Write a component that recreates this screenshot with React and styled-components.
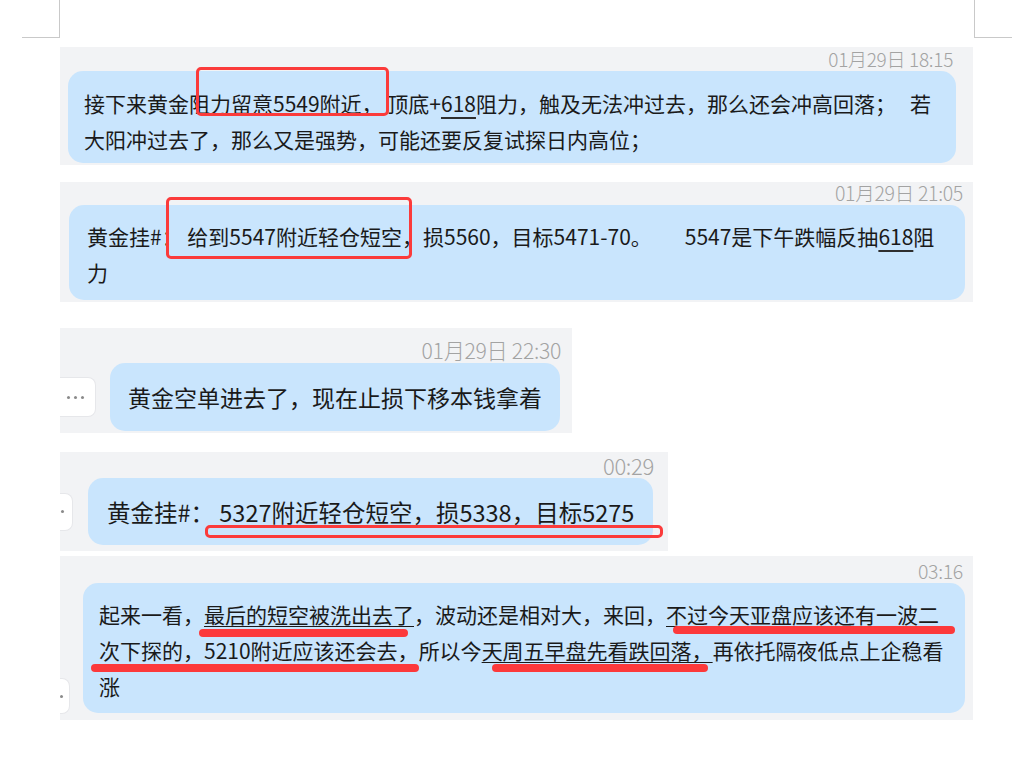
import React from 'react';
import styled, { createGlobalStyle } from 'styled-components';

const Global = createGlobalStyle`
  html, body {
    margin: 0;
    padding: 0;
    background: #ffffff;
  }
  body {
    font-family: "Noto Sans CJK SC", "Noto Sans", sans-serif;
    color: #1a1a1a;
  }
`;

const Page = styled.div`
  width: 1032px;
  height: 761px;
  overflow: hidden;
`;

const Marks = styled.div`
  display: flex;
  justify-content: space-between;
  margin-left: 22px;
  width: 990px;
  height: 38px;
`;

const Corner = styled.div`
  width: 38px;
  height: 38px;
  box-sizing: border-box;
  border-bottom: 1px solid #c9c9c9;
  ${p => (p.$side === 'left' ? 'border-right: 1px solid #c9c9c9;' : 'border-left: 1px solid #c9c9c9;')}
`;

const Feed = styled.div`
  display: flex;
  flex-direction: column;
  margin-left: 60px;
`;

const Panel = styled.section`
  width: ${p => p.$w}px;
  margin-top: ${p => p.$mt}px;
  padding: ${p => p.$pt}px 0 ${p => p.$pb}px;
  background: #f2f3f5;
  box-sizing: border-box;
`;

const Stamp = styled.div`
  text-align: right;
  font-size: ${p => p.$size}px;
  line-height: ${p => p.$lh}px;
  letter-spacing: -0.3px;
  padding-right: ${p => p.$pr}px;
  margin-bottom: ${p => p.$mb}px;
  color: #a3a3a3;
  font-weight: 300;
  white-space: nowrap;
`;

const Row = styled.div`
  display: flex;
  align-items: ${p => p.$align || 'center'};
  gap: ${p => p.$gap || 0}px;
  padding: 0 ${p => p.$pr}px 0 ${p => p.$pl}px;
`;

const More = styled.div`
  flex: none;
  display: flex;
  align-items: center;
  justify-content: flex-end;
  gap: 4px;
  width: ${p => p.$w}px;
  height: ${p => p.$h}px;
  padding-right: ${p => p.$pr}px;
  margin-bottom: ${p => p.$mb || 0}px;
  background: #ffffff;
  border: 1px solid #e6e7ea;
  border-left: none;
  border-radius: 0 8px 8px 0;
  box-sizing: border-box;
  overflow: hidden;
`;

const Dot = styled.i`
  flex: none;
  width: 3px;
  height: 3px;
  border-radius: 50%;
  background: #8a8a8a;
`;

const Bubble = styled.div`
  flex: ${p => (p.$fill ? '1' : 'none')};
  padding: ${p => p.$pad};
  background: #c9e5fd;
  border-radius: 15px;
  font-size: ${p => p.$size}px;
  line-height: ${p => p.$lh}px;
  color: #1a1a1a;
`;

const Line = styled.div`
  white-space: pre;
`;

const Link = styled.span`
  text-decoration: underline;
  text-decoration-thickness: 2px;
  text-underline-offset: 5px;
  text-decoration-color: #2e2e2e;
`;

const Boxed = styled.span`
  position: relative;
  display: inline-block;
  &::after {
    content: '';
    position: absolute;
    left: ${p => p.$l}px;
    right: ${p => p.$r}px;
    top: ${p => p.$t}px;
    bottom: ${p => p.$b}px;
    border: 3px solid #fb3b3b;
    border-radius: 5px;
    pointer-events: none;
  }
`;

const Marked = styled.span`
  position: relative;
  display: inline-block;
  text-decoration: ${p => (p.$under ? 'underline' : 'none')};
  text-decoration-thickness: 1px;
  text-underline-offset: 3px;
  &::after {
    content: '';
    position: absolute;
    left: ${p => p.$l}px;
    right: ${p => p.$r}px;
    bottom: ${p => p.$b}px;
    height: 8px;
    border-radius: 4px;
    background: #fc393b;
  }
`;

const MoreButton = ({ w, h, pr, mb }) => (
  <More $w={w} $h={h} $pr={pr} $mb={mb}>
    <Dot />
    <Dot />
    <Dot />
  </More>
);

export default function App() {
  return (
    <Page>
      <Global />
      <Marks>
        <Corner $side="left" />
        <Corner $side="right" />
      </Marks>
      <Feed>
        <Panel $w={913} $mt={9} $pt={1} $pb={2}>
          <Stamp $size={19} $lh={22} $pr={20} $mb={1}>01月29日 18:15</Stamp>
          <Row $pl={8} $pr={17}>
            <Bubble $fill $size={21} $lh={36} $pad="14px 16px 6px">
              <Line>
                接下来黄金阻<Boxed $l={-14} $r={-6} $t={-18} $b={5}>力留意5549附近，</Boxed> 顶底+<Link>618</Link>阻力，触及无法冲过去，那么还会冲高回落；   若
              </Line>
              <Line>大阳冲过去了，那么又是强势，可能还要反复试探日内高位；</Line>
            </Bubble>
          </Row>
        </Panel>

        <Panel $w={913} $mt={17} $pt={0} $pb={2}>
          <Stamp $size={19.5} $lh={22} $pr={10} $mb={1}>01月29日 21:05</Stamp>
          <Row $pl={9} $pr={8}>
            <Bubble $fill $size={21} $lh={36} $pad="13px 18px 10px">
              <Line>
                黄金挂#： <Boxed $l={-21} $r={-10} $t={-21} $b={-5}>给到5547附近轻仓短空</Boxed>，损5560，目标5471-70。       5547是下午跌幅反抽<Link>618</Link>阻
              </Line>
              <Line>力</Line>
            </Bubble>
          </Row>
        </Panel>

        <Panel $w={512} $mt={26} $pt={10} $pb={2}>
          <Stamp $size={21.2} $lh={24} $pr={11} $mb={1}>01月29日 22:30</Stamp>
          <Row $pl={0} $pr={9} $gap={14}>
            <MoreButton w={36} h={40} pr={11} />
            <Bubble $size={23} $lh={36} $pad="16px 18px">
              <Line>黄金空单进去了，现在止损下移本钱拿着</Line>
            </Bubble>
          </Row>
        </Panel>

        <Panel $w={608} $mt={19} $pt={0} $pb={6}>
          <Stamp $size={22} $lh={26} $pr={14} $mb={0}>00:29</Stamp>
          <Row $pl={0} $pr={12} $gap={15}>
            <MoreButton w={13} h={38} pr={8} />
            <Bubble $size={23.5} $lh={36} $pad="15.5px 19px">
              <Line>
                黄金挂#： <Boxed $l={-14} $r={-29} $t={31} $b={-8}>5327附近轻仓短空，损5338，目标5275</Boxed>
              </Line>
            </Bubble>
          </Row>
        </Panel>

        <Panel $w={913} $mt={5} $pt={3} $pb={7}>
          <Stamp $size={19.5} $lh={24} $pr={10} $mb={0}>03:16</Stamp>
          <Row $pl={0} $pr={8} $gap={13} $align="flex-end">
            <MoreButton w={10} h={36} pr={6} mb={-1} />
            <Bubble $fill $size={21} $lh={36} $pad="13px 16px 9px">
              <Line>
                起来一看，<Marked $under $l={-5} $r={6} $b={-5}>最后的短空被洗出去了</Marked>，波动还是相对大，来回，<Marked $under $l={7} $r={-16} $b={-2}>不过今天亚盘应该还有一波二</Marked>
              </Line>
              <Line>
                <Marked $l={-8} $r={0} $b={-4}>次下探的，5210附近应该还会去，</Marked>所以今<Marked $under $l={10} $r={5} $b={-4}>天周五早盘先看跌回落，</Marked>再依托隔夜低点上企稳看
              </Line>
              <Line>涨</Line>
            </Bubble>
          </Row>
        </Panel>
      </Feed>
    </Page>
  );
}
